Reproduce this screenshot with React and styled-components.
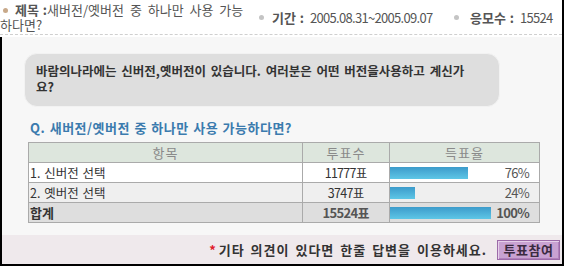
import React from "react";
import styled, { createGlobalStyle } from "styled-components";

const Global = createGlobalStyle`
  html, body { margin: 0; padding: 0; background: #fff; }
  body {
    font-family: "Noto Sans CJK KR", "Noto Sans", sans-serif;
    font-size: 12px;
    word-spacing: 3px;
  }
  * { box-sizing: border-box; }
`;

const Frame = styled.div`
  width: 564px;
  height: 266px;
  border-right: 2px solid #000;
  border-bottom: 2px solid #000;
  display: flex;
  flex-direction: column;
  background: #fff;
`;

const Header = styled.div`
  display: flex;
  align-items: center;
  height: 35px;
  border-bottom: 1px dashed #cfcfcf;
  color: #555;
  font-size: 13px;
`;

const Cell = styled.div`
  width: ${(p) => p.$w}px;
  padding-right: ${(p) => p.$pr || 0}px;
  flex: none;
  line-height: 15px;
  white-space: ${(p) => (p.$nowrap ? "nowrap" : "normal")};
`;

const Bullet = styled.span`
  display: inline-block;
  width: 5px;
  height: 5px;
  border-radius: 50%;
  background: ${(p) => p.$c};
  margin: 0 ${(p) => p.$mr}px 2px ${(p) => p.$ml}px;
  vertical-align: middle;
`;

const Label = styled.b`
  font-weight: bold;
  color: #555;
  word-spacing: 1px;
`;

const Num = styled.span`
  letter-spacing: -0.7px;
  word-spacing: 0;
`;

const Body = styled.div`
  margin-top: 2px;
  flex: 1;
  background: #f7f7f7;
  border-left: 2px solid #000;
  padding: 16px 0 0 22px;
`;

const Notice = styled.div`
  width: 476px;
  height: 54px;
  background: #dedede;
  border: 1px solid #f2f2f2;
  border-radius: 13px;
  padding: 9px 20px 0 11px;
  font-weight: bold;
  font-size: 12.5px;
  word-spacing: 2px;
  color: #333;
  line-height: 16px;
`;

const Question = styled.div`
  margin: 13px 0 0 6px;
  color: #3b7bae;
  font-weight: bold;
  font-size: 13px;
  letter-spacing: 0.5px;
  word-spacing: 1px;
  line-height: 16px;
`;

const Table = styled.table`
  margin: 6px 0 0 4px;
  width: 511px;
  border-collapse: collapse;
  border: 1px solid #aaa;
  table-layout: fixed;
`;

const Th = styled.th`
  height: 20px;
  padding: 0;
  background: #dde6dd;
  border: 1px solid #aaa;
  color: #8a8a8a;
  font-weight: normal;
  font-size: 13px;
  text-align: center;
  line-height: 18px;
  letter-spacing: 1px;
`;

const Row = styled.tr`
  background: ${(p) => p.$bg};
  font-weight: ${(p) => (p.$bold ? "bold" : "normal")};
  font-size: ${(p) => (p.$bold ? 13 : 12.5)}px;
`;

const Td = styled.td`
  height: 20px;
  padding: 0 0 0 ${(p) => (p.$pl ? p.$pl : 0)}px;
  border: 1px solid #aaa;
  text-align: ${(p) => p.$align || "left"};
  color: ${(p) => p.$color || "#333"};
  line-height: 18px;
  white-space: nowrap;
  word-spacing: 1px;
`;

const RateBox = styled.div`
  display: flex;
  align-items: center;
  justify-content: space-between;
  padding-right: 10px;
`;

const Bar = styled.div`
  height: 12px;
  background: linear-gradient(#3c9bcb, #5ec6e6);
`;

const Pct = styled.span`
  color: #555;
  font-size: 13px;
`;

const Footer = styled.div`
  height: 29px;
  background: #efe9ec;
  border-left: 2px solid #000;
  display: flex;
  align-items: center;
  justify-content: flex-end;
  padding-right: 2px;
  gap: 10px;
`;

const Hint = styled.span`
  font-weight: bold;
  font-size: 13px;
  letter-spacing: 1px;
  word-spacing: 2px;
  color: #333;
`;

const Star = styled.span`
  color: #e0202a;
  margin-right: 2px;
`;

const Button = styled.button`
  width: 63px;
  height: 20px;
  padding: 0;
  background: #c9a2d2;
  border: 1px solid #9c6aa8;
  box-shadow: inset 1px 1px 0 #e6d0ea, inset -1px -1px 0 #b080bb;
  font-family: inherit;
  font-size: 13px;
  font-weight: bold;
  color: #3a2a40;
  letter-spacing: 0.5px;
  line-height: 16px;
`;

const rows = [
  { label: "1. 신버전 선택", votes: "11777", pct: 76, bg: "#fff" },
  { label: "2. 옛버전 선택", votes: "3747", pct: 24, bg: "#efefef" },
];

const FULL = 101;

export default function App() {
  return (
    <>
      <Global />
      <Frame>
        <Header>
          <Cell $w={256} $pr={12}>
            <Bullet $c="#c8a98a" $ml={3} $mr={7} />
            <Label>제목 :</Label>새버전/옛버전 중 하나만 사용 가능하다면?
          </Cell>
          <Cell $w={196} $nowrap>
            <Bullet $c="#c4c4c4" $ml={3} $mr={8} />
            <Label>기간 :</Label> <Num>2005.08.31~2005.09.07</Num>
          </Cell>
          <Cell $w={110} $nowrap>
            <Bullet $c="#c4c4c4" $ml={2} $mr={11} />
            <Label>응모수 :</Label> <Num>15524</Num>
          </Cell>
        </Header>
        <Body>
          <Notice>
            바람의나라에는 신버전,옛버전이 있습니다. 여러분은 어떤 버전을사용하고 계신가요?
          </Notice>
          <Question>Q. 새버전/옛버전 중 하나만 사용 가능하다면?</Question>
          <Table>
            <colgroup>
              <col style={{ width: 274 }} />
              <col style={{ width: 87 }} />
              <col style={{ width: 150 }} />
            </colgroup>
            <thead>
              <tr>
                <Th>항목</Th>
                <Th>투표수</Th>
                <Th>득표율</Th>
              </tr>
            </thead>
            <tbody>
              {rows.map((r) => (
                <Row key={r.label} $bg={r.bg}>
                  <Td $pl={1}>{r.label}</Td>
                  <Td $align="center">
                    <Num>{r.votes}</Num>표
                  </Td>
                  <Td>
                    <RateBox>
                      <Bar style={{ width: Math.round((FULL * r.pct) / 100) + 1 }} />
                      <Pct>
                        <Num>{r.pct}%</Num>
                      </Pct>
                    </RateBox>
                  </Td>
                </Row>
              ))}
              <Row $bg="#dedede" $bold>
                <Td $pl={1}>합계</Td>
                <Td $align="center" $color="#555">
                  <Num>15524</Num>표
                </Td>
                <Td>
                  <RateBox>
                    <Bar style={{ width: FULL }} />
                    <Pct>
                      <Num>100%</Num>
                    </Pct>
                  </RateBox>
                </Td>
              </Row>
            </tbody>
          </Table>
        </Body>
        <Footer>
          <Hint>
            <Star>*</Star>기타 의견이 있다면 한줄 답변을 이용하세요.
          </Hint>
          <Button>투표참여</Button>
        </Footer>
      </Frame>
    </>
  );
}
